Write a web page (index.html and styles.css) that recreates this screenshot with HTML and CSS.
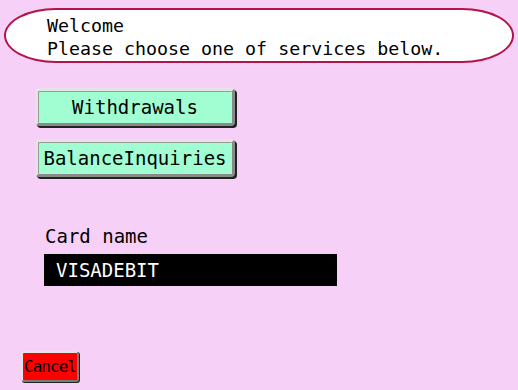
FILE: index.html
```html
<!DOCTYPE html>
<html lang="en">
<head>
  <meta charset="UTF-8" />
  <title>ATM - Services</title>
  <link rel="stylesheet" href="styles.css">
</head>
<body>

  <!-- Message -->
  <div class="message">
    <div>Welcome</div>
    <div>Please choose one of services below.</div>
  </div>

  <!-- Services -->
  <div class="services">
    <button class="service">Withdrawals</button>
    <button class="service">BalanceInquiries</button>
  </div>

  <!-- Card -->
  <div class="card">
    <div class="card-label">Card name</div>
    <div class="card-value">VISADEBIT</div>
  </div>

  <div class="footer">
    <button class="cancel">Cancel</button>
  </div>

</body>
</html>
```

FILE: styles.css
```css
body {
  margin: 0;
  width: 518px;
  height: 390px;
  background-color: #f7d0f8;
  font-family: 'DejaVu Sans Mono', monospace;
  color: #000;
  display: flex;
  flex-direction: column;
}

.message {
  margin: 8px 4px 0 4px;
  height: 47px;
  padding: 4px 0 0 41px;
  background-color: #fff;
  border: 2px solid #b3144a;
  border-radius: 52px / 50%;
  font-size: 18.3px;
  line-height: 23px;
}

.services {
  display: flex;
  flex-direction: column;
  align-items: flex-start;
  gap: 13px;
  margin: 25px 0 0 35px;
}

.service {
  width: 200px;
  height: 38px;
  padding: 0;
  background-color: #a0fed2;
  border: 3px solid;
  border-color: #e4e4e4 #8a8a8a #8a8a8a #e4e4e4;
  border-radius: 4px;
  box-shadow: inset 1px 1px 0 #9a9a9a, 2px 2px 0 #222;
  font-family: 'DejaVu Sans Mono', monospace;
  font-size: 19px;
  color: #000;
  cursor: pointer;
}

.card {
  margin: 48px 0 0 44px;
}

.card-label {
  font-size: 19px;
  line-height: 22px;
  padding-left: 1px;
}

.card-value {
  margin-top: 7px;
  width: 281px;
  height: 32px;
  padding-left: 12px;
  background-color: #000;
  color: #fff;
  font-size: 19px;
  line-height: 32px;
}

.footer {
  margin-top: auto;
  padding: 0 0 8px 21px;
}

.cancel {
  width: 58px;
  height: 31px;
  padding: 0;
  background-color: #ff0000;
  border: 2px solid;
  border-color: #e4e4e4 #7a7a7a #7a7a7a #e4e4e4;
  border-radius: 3px;
  box-shadow: 1px 1px 0 #222;
  font-family: 'DejaVu Sans Mono', monospace;
  font-size: 16px;
  letter-spacing: -1px;
  color: #000;
  cursor: pointer;
}
```
